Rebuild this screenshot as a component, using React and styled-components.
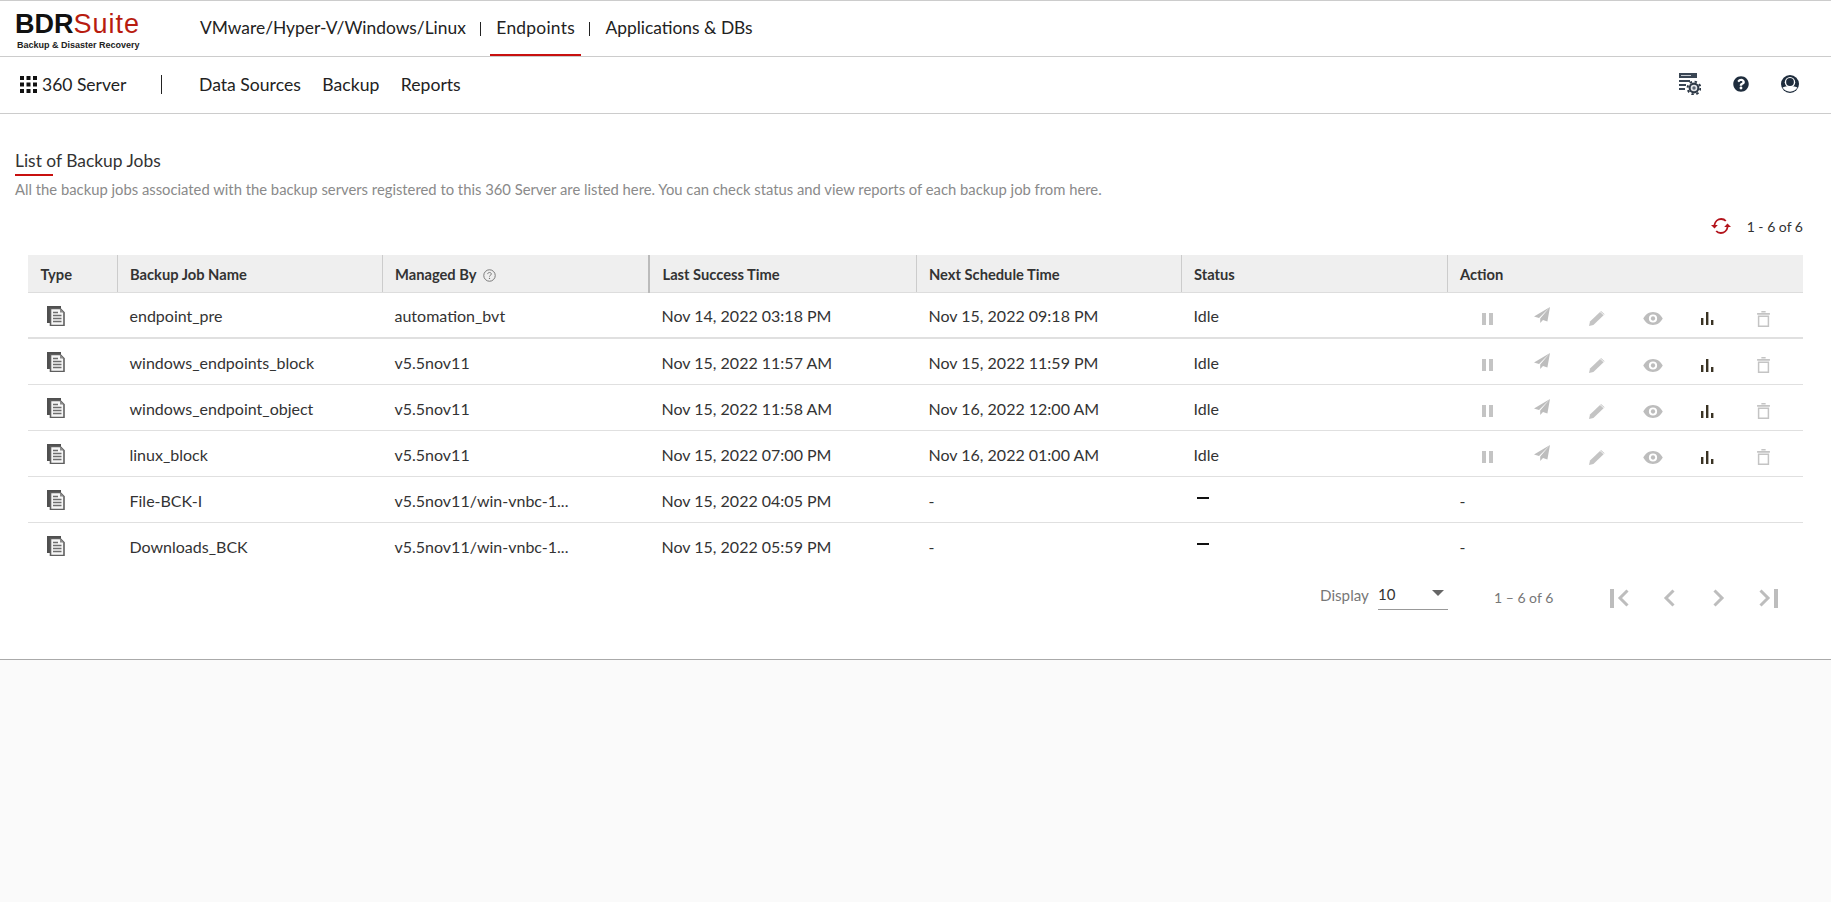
import React from 'react';
import styled, { createGlobalStyle } from 'styled-components';
import { FaQuestionCircle } from 'react-icons/fa';

const jobs = [
  { name: 'endpoint_pre', by: 'automation_bvt', last: 'Nov 14, 2022 03:18 PM', next: 'Nov 15, 2022 09:18 PM', status: 'Idle', strong: true },
  { name: 'windows_endpoints_block', by: 'v5.5nov11', last: 'Nov 15, 2022 11:57 AM', next: 'Nov 15, 2022 11:59 PM', status: 'Idle' },
  { name: 'windows_endpoint_object', by: 'v5.5nov11', last: 'Nov 15, 2022 11:58 AM', next: 'Nov 16, 2022 12:00 AM', status: 'Idle' },
  { name: 'linux_block', by: 'v5.5nov11', last: 'Nov 15, 2022 07:00 PM', next: 'Nov 16, 2022 01:00 AM', status: 'Idle' },
  { name: 'File-BCK-I', by: 'v5.5nov11/win-vnbc-1...', last: 'Nov 15, 2022 04:05 PM', next: '-' },
  { name: 'Downloads_BCK', by: 'v5.5nov11/win-vnbc-1...', last: 'Nov 15, 2022 05:59 PM', next: '-' },
];

const columns = [
  { label: 'Type', width: 89 },
  { label: 'Backup Job Name', width: 265 },
  { label: 'Managed By', width: 267, hint: true },
  { label: 'Last Success Time', width: 267, dark: true },
  { label: 'Next Schedule Time', width: 265 },
  { label: 'Status', width: 266 },
  { label: 'Action', width: 356 },
];

const App = () => (
  <>
    <GlobalStyle />
    <TopBar>
      <Logo>
        <LogoName>BDR<LogoAccent>Suite</LogoAccent></LogoName>
        <LogoTag>Backup &amp; Disaster Recovery</LogoTag>
      </Logo>
      <Tabs>
        <Tab>VMware/Hyper-V/Windows/Linux</Tab>
        <TabDivider />
        <Tab $active>Endpoints</Tab>
        <TabDivider />
        <Tab>Applications &amp; DBs</Tab>
      </Tabs>
    </TopBar>

    <SubBar>
      <AppSwitch>
        <GridIcon />
        360 Server
      </AppSwitch>
      <SubDivider />
      <SubMenu>
        <SubLink>Data Sources</SubLink>
        <SubLink>Backup</SubLink>
        <SubLink>Reports</SubLink>
      </SubMenu>
      <SubTools>
        <ServerGearIcon />
        <HelpIcon />
        <UserIcon />
      </SubTools>
    </SubBar>

    <Main>
      <Title>List of Backup Jobs</Title>
      <TitleRule />
      <Subtitle>
        All the backup jobs associated with the backup servers registered to this 360 Server are listed here. You can check status and view reports of each backup job from here.
      </Subtitle>

      <MetaRow>
        <RefreshIcon />
        <span>1 - 6 of 6</span>
      </MetaRow>

      <JobsTable>
        <colgroup>
          {columns.map((c) => <col key={c.label} style={{ width: c.width }} />)}
        </colgroup>
        <thead>
          <tr>
            {columns.map((c) => (
              <HeadCell key={c.label} $dark={c.dark}>
                {c.label}
                {c.hint && <HintIcon />}
              </HeadCell>
            ))}
          </tr>
        </thead>
        <tbody>
          {jobs.map((job) => (
            <Row key={job.name} $strong={job.strong}>
              <Cell><FileIcon /></Cell>
              <Cell>{job.name}</Cell>
              <Cell>{job.by}</Cell>
              <Cell>{job.last}</Cell>
              <Cell>{job.next}</Cell>
              <Cell>{job.status ? job.status : <StatusDash />}</Cell>
              <Cell>
                {job.status ? (
                  <Actions>
                    <ActionSlot><PauseIcon /></ActionSlot>
                    <ActionSlot><SendIcon /></ActionSlot>
                    <ActionSlot><PencilIcon /></ActionSlot>
                    <ActionSlot><EyeIcon /></ActionSlot>
                    <ActionSlot><ChartIcon /></ActionSlot>
                    <ActionSlot><TrashIcon /></ActionSlot>
                  </Actions>
                ) : '-'}
              </Cell>
            </Row>
          ))}
        </tbody>
      </JobsTable>

      <Pager>
        <DisplayLabel>Display</DisplayLabel>
        <PageSize>
          10
          <Caret />
        </PageSize>
        <PageRange>1 – 6 of 6</PageRange>
        <PagerButtons>
          <PagerButton><EdgeBar /><ChevronLeft /></PagerButton>
          <PagerButton><ChevronLeft /></PagerButton>
          <PagerButton><ChevronRight /></PagerButton>
          <PagerButton><ChevronRight /><EdgeBar /></PagerButton>
        </PagerButtons>
      </Pager>
    </Main>
  </>
);

export default App;

const GridIcon = () => (
  <GridSvg viewBox="0 0 17 17" width="17" height="17">
    {[0, 6.5, 13].flatMap((y) => [0, 6.5, 13].map((x) => (
      <rect key={`${x}-${y}`} x={x} y={y} width="4" height="4" fill="#111" />
    )))}
  </GridSvg>
);

const ServerGearIcon = () => (
  <svg viewBox="0 0 22 22" width="22" height="22">
    <path d="M0 0h18v5H0z" fill="#3a4654" />
    <path d="M2 2h10v1H2z" fill="#c9ced4" />
    <path d="M0 7h11v2H0zM0 11h7v2H0zM0 15h6v2H0z" fill="#3a4654" />
    <circle cx="15" cy="15" r="6.4" fill="none" stroke="#2e3946" strokeWidth="2" strokeDasharray="2.4 2.6" />
    <circle cx="15" cy="15" r="5.4" fill="#2e3946" />
    <circle cx="15" cy="15" r="3.3" fill="#e4e6e9" />
    <circle cx="15" cy="15" r="1.7" fill="#5c6774" />
  </svg>
);

const HelpIcon = () => <FaQuestionCircle size={16} color="#1f2d3d" />;

const UserIcon = () => (
  <svg viewBox="0 0 18 18" width="18" height="18">
    <circle cx="9" cy="9" r="9" fill="#1f2d3d" />
    <circle cx="9" cy="7.2" r="5.2" fill="#fff" />
    <circle cx="9" cy="7" r="3.9" fill="#1f2d3d" />
    <path d="M1.6 12.6C4 10.8 14 10.8 16.4 12.6C15 15.2 12.2 16.7 9 16.7S3 15.2 1.6 12.6z" fill="#fff" />
  </svg>
);

const RefreshIcon = () => (
  <svg viewBox="0 0 20 16" width="20" height="16">
    <path d="M3.4 7.2C4 3.4 7 1 10.2 1c2 0 3.6.8 4.6 2" fill="none" stroke="#b3141c" strokeWidth="1.8" />
    <path d="M0 7l3.5 3.4L6.8 7z" fill="#b3141c" />
    <path d="M16.6 8.8C16 12.6 13 15 9.8 15c-2 0-3.6-.8-4.6-2" fill="none" stroke="#b3141c" strokeWidth="1.8" />
    <path d="M20 9l-3.5-3.4L13.2 9z" fill="#b3141c" />
  </svg>
);

const HintIcon = () => (
  <HintSvg viewBox="0 0 12 12" width="13" height="13">
    <circle cx="6" cy="6" r="5.3" fill="none" stroke="#777" strokeWidth="0.9" />
    <path d="M4.3 4.7C4.4 3.6 5.2 3.2 6 3.2c1 0 1.7.6 1.7 1.4 0 1.2-1.7 1.2-1.7 2.4" fill="none" stroke="#777" strokeWidth="0.9" />
    <circle cx="6" cy="8.7" r="0.6" fill="#777" />
  </HintSvg>
);

const FileIcon = () => (
  <FileSvg viewBox="0 0 18 20" width="18" height="20">
    <path d="M0 0h14v17H0z" fill="#4f4f4f" />
    <path d="M3.5 2.5h9.5l4 4v13H3.5z" fill="#f6f6f6" stroke="#5f5f5f" strokeWidth="1.6" />
    <path d="M13 2.5v4h4z" fill="#8c8c8c" />
    <path d="M6 6.5h5M6 9.5h8.5M6 12.5h8.5M6 15.5h8.5" stroke="#6e6e6e" strokeWidth="1.3" />
  </FileSvg>
);

const PauseIcon = () => (
  <svg viewBox="0 0 11 12" width="11" height="12">
    <path d="M0 0h4v12H0zM7 0h4v12H7z" fill="#c4c4c4" />
  </svg>
);

const SendIcon = () => (
  <RaisedSvg viewBox="0 0 16 16" width="16" height="16">
    <path d="M16 0L0 9.5l5 1.6zM16 0L6.2 11.6V16l2.8-3 4.4 1.6z" fill="#bdbdbd" />
  </RaisedSvg>
);

const PencilIcon = () => (
  <svg viewBox="0 0 16 15" width="16" height="15">
    <path d="M0 15l1-4.4L11 1l3.6 3.2L4.4 14z" fill="#c4c4c4" />
    <path d="M12 0l3.6 3.2-.6.6L11.4.6z" fill="#c4c4c4" />
  </svg>
);

const EyeIcon = () => (
  <svg viewBox="0 0 18 12" width="20" height="13">
    <path fillRule="evenodd" d="M9 0c4 0 7.2 2.6 9 6-1.8 3.4-5 6-9 6S1.8 9.4 0 6c1.8-3.4 5-6 9-6zm0 2.2a3.8 3.8 0 100 7.6 3.8 3.8 0 000-7.6z" fill="#bdbdbd" />
    <circle cx="9" cy="6" r="2" fill="#bdbdbd" />
  </svg>
);

const ChartIcon = () => (
  <svg viewBox="0 0 13 13" width="13" height="13">
    <path d="M0 6h2.4v7H0zM5 0h2.4v13H5zM10 8h2.4v5H10z" fill="#3a3324" />
  </svg>
);

const TrashIcon = () => (
  <svg viewBox="0 0 12 15" width="13" height="16">
    <path d="M4 0h4v1.4H4zM0 1.8h12v1.6H0z" fill="#c4c4c4" />
    <path d="M1.4 5h9.2v9.2H1.4z" fill="none" stroke="#c4c4c4" strokeWidth="1.4" />
  </svg>
);

const ChevronLeft = () => (
  <svg viewBox="0 0 12 18" width="12" height="18">
    <path d="M10.5 1.5L3 9l7.5 7.5" fill="none" stroke="#bdbdbd" strokeWidth="3" />
  </svg>
);

const ChevronRight = () => (
  <svg viewBox="0 0 12 18" width="12" height="18">
    <path d="M1.5 1.5L9 9l-7.5 7.5" fill="none" stroke="#bdbdbd" strokeWidth="3" />
  </svg>
);

const GlobalStyle = createGlobalStyle`
  html, body {
    margin: 0;
    padding: 0;
    min-height: 100%;
    background: #fafafa;
    font-family: "Lato", "Liberation Sans", sans-serif;
    color: #333;
  }
  * {
    box-sizing: border-box;
  }
`;

const TopBar = styled.header`
  display: flex;
  height: 57px;
  background: #fff;
  border-top: 1px solid #ccc;
  border-bottom: 1px solid #ccc;
`;

const Logo = styled.div`
  width: 194px;
  padding: 10px 0 0 15px;
  flex-shrink: 0;
`;

const LogoName = styled.div`
  font-family: "Liberation Sans", sans-serif;
  font-size: 27px;
  line-height: 27px;
  font-weight: 700;
  color: #111;
`;

const LogoAccent = styled.span`
  font-weight: 400;
  color: #b81c10;
  letter-spacing: 1px;
`;

const LogoTag = styled.div`
  margin: 2px 0 0 2px;
  font-family: "Liberation Sans", sans-serif;
  font-size: 9px;
  line-height: 10px;
  font-weight: 700;
  color: #222;
  white-space: nowrap;
`;

const Tabs = styled.nav`
  display: flex;
  align-items: center;
  height: 55px;
`;

const Tab = styled.a`
  display: flex;
  align-items: center;
  height: 55px;
  padding: 0 6px;
  font-size: 17.4px;
  letter-spacing: ${(p) => (p.$active ? '0.25px' : '0')};
  color: #222;
  border-bottom: 2px solid ${(p) => (p.$active ? '#c8100f' : 'transparent')};
`;

const TabDivider = styled.span`
  width: 1px;
  height: 14px;
  margin: 0 9px 0 8.5px;
  background: #222;
`;

const SubBar = styled.div`
  display: flex;
  align-items: center;
  height: 57px;
  padding: 0 0 2px 20px;
  background: #fff;
  border-bottom: 1px solid #ccc;
`;

const AppSwitch = styled.div`
  display: flex;
  align-items: center;
  gap: 5px;
  width: 141px;
  font-size: 17.5px;
  color: #222;
`;

const GridSvg = styled.svg`
  flex-shrink: 0;
`;

const SubDivider = styled.span`
  width: 1px;
  height: 19px;
  background: #222;
`;

const SubMenu = styled.div`
  display: flex;
  gap: 21.5px;
  margin-left: 37px;
`;

const SubLink = styled.a`
  font-size: 17.6px;
  color: #222;
`;

const SubTools = styled.div`
  display: flex;
  align-items: center;
  gap: 32px;
  margin-left: auto;
  padding-right: 32px;
`;

const Main = styled.main`
  height: 546px;
  padding-top: 37px;
  background: #fff;
  border-bottom: 1px solid #aaa;
`;

const Title = styled.h1`
  margin: 0 0 0 15px;
  font-size: 17.4px;
  line-height: 20px;
  font-weight: 400;
  color: #333;
`;

const TitleRule = styled.div`
  width: 38px;
  height: 2px;
  margin: 3px 0 0 15px;
  background: #c8100f;
`;

const Subtitle = styled.p`
  margin: 3px 0 0 15px;
  font-size: 14.8px;
  line-height: 20px;
  color: #8a8a8a;
`;

const MetaRow = styled.div`
  display: flex;
  align-items: center;
  justify-content: flex-end;
  gap: 16px;
  height: 20px;
  margin: 17px 28px 0 0;
  font-size: 14px;
  color: #333;
`;

const JobsTable = styled.table`
  width: 1775px;
  margin: 19px 0 0 28px;
  border-collapse: collapse;
  table-layout: fixed;
`;

const HeadCell = styled.th`
  height: 37px;
  padding: 2px 0 0 12.5px;
  background: #efefef;
  border-bottom: 1px solid #ddd;
  border-left: ${(p) => (p.$dark ? '2px solid #bbb' : '1px solid #ccc')};
  font-size: 14.7px;
  font-weight: 700;
  text-align: left;
  color: #333;

  &:first-child {
    border-left: 0;
  }
`;

const HintSvg = styled.svg`
  margin-left: 6px;
  vertical-align: -2px;
`;

const Row = styled.tr`
  height: 46px;
  border-bottom: ${(p) => (p.$strong ? '2px' : '1px')} solid #e0e0e0;

  &:last-child {
    border-bottom: 0;
  }
`;

const Cell = styled.td`
  padding: 2px 0 0 12.5px;
  font-size: 16px;
  color: #333;
`;

const FileSvg = styled.svg`
  display: block;
  margin: 0 0 0 6px;
`;

const RaisedSvg = styled.svg`
  margin-top: -8px;
`;

const StatusDash = styled.span`
  display: block;
  width: 12px;
  height: 2px;
  margin: 0 0 5px 3px;
  background: #111;
`;

const Actions = styled.div`
  display: flex;
  align-items: center;
  margin: 6px 0 0 0;
`;

const ActionSlot = styled.span`
  display: flex;
  align-items: center;
  justify-content: center;
  width: 55.2px;
  height: 24px;
`;

const Pager = styled.div`
  display: flex;
  align-items: center;
  margin: 9px 0 0 1320px;
  height: 38px;
`;

const DisplayLabel = styled.span`
  width: 58px;
  margin-bottom: 2px;
  font-size: 15.2px;
  color: #777;
`;

const PageSize = styled.div`
  position: relative;
  width: 70px;
  height: 28px;
  line-height: 24px;
  font-size: 15px;
  color: #333;
  border-bottom: 1px solid #999;
`;

const Caret = styled.span`
  position: absolute;
  right: 4px;
  top: 8px;
  border-left: 6px solid transparent;
  border-right: 6px solid transparent;
  border-top: 6px solid #666;
`;

const PageRange = styled.span`
  margin: 2px 0 0 46px;
  font-size: 14px;
  color: #777;
`;

const PagerButtons = styled.div`
  display: flex;
  align-items: center;
  gap: 21.7px;
  margin: 4px 0 0 52px;
`;

const PagerButton = styled.span`
  display: flex;
  align-items: center;
  justify-content: center;
  gap: 3px;
  width: 28px;
  height: 28px;
`;

const EdgeBar = styled.span`
  flex-shrink: 0;
  width: 3.5px;
  height: 19px;
  background: #bdbdbd;
`;
